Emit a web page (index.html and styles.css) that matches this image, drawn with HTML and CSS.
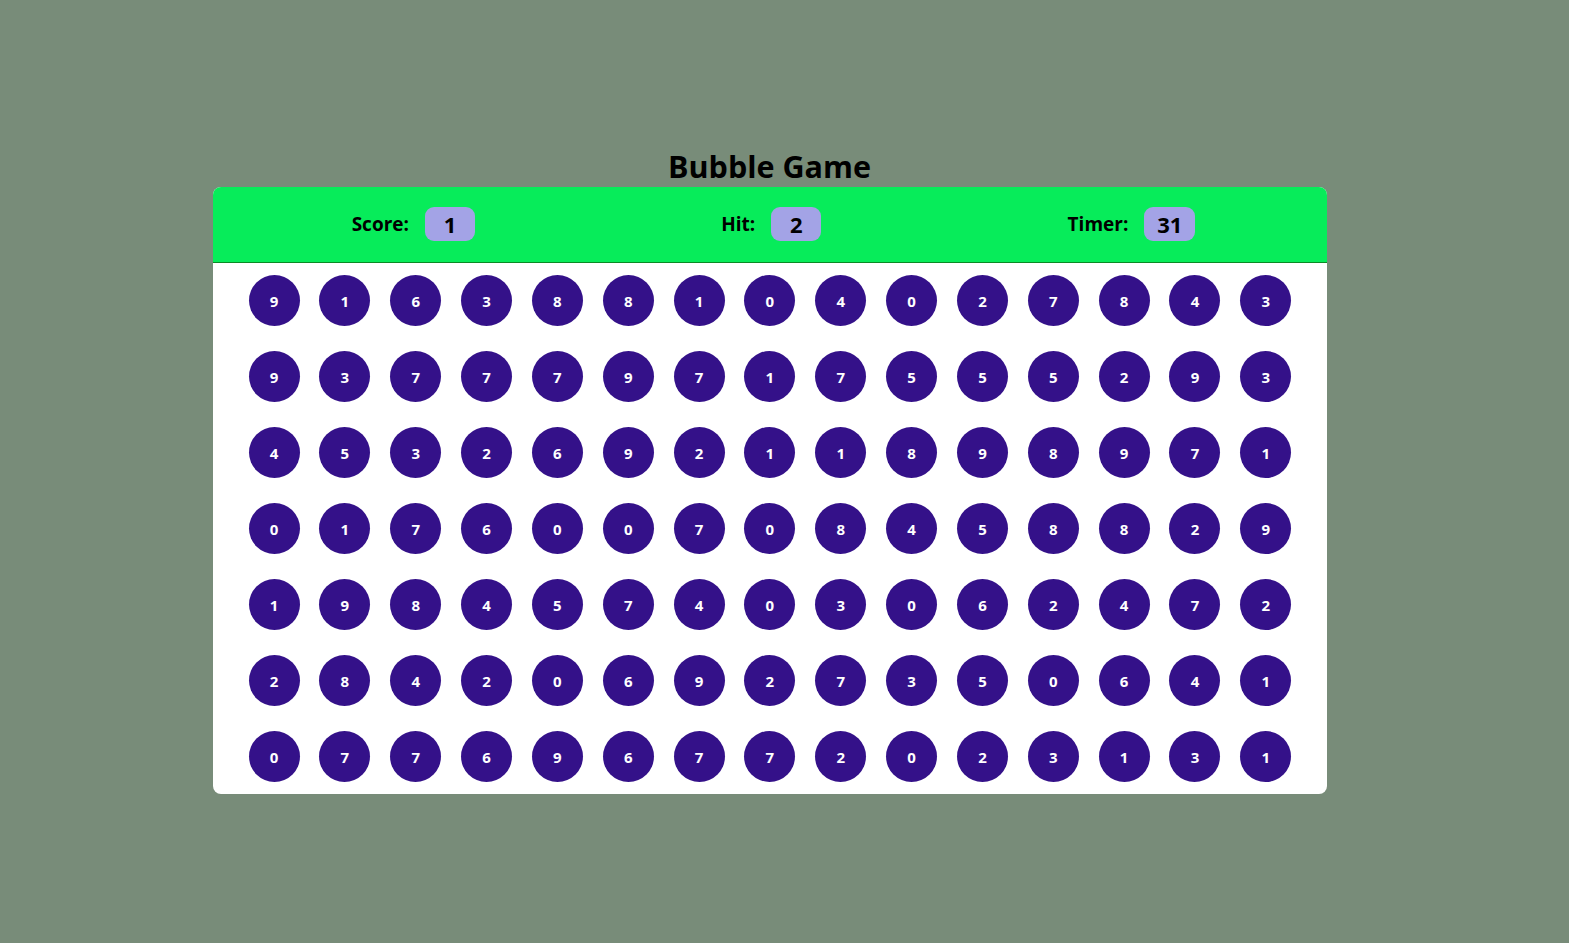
FILE: index.html
```html
<!DOCTYPE html>
<html>
<head>
<meta charset="utf-8">
<title>Bubble Game</title>
<link rel="stylesheet" href="styles.css">
</head>
<body>
<div class="page">
  <h1 class="title">Bubble Game</h1>
  <div class="panel">
    <div class="top">
      <div class="stat"><span class="label">Score:</span><span class="box">1</span></div>
      <div class="stat"><span class="label">Hit:</span><span class="box">2</span></div>
      <div class="stat"><span class="label">Timer:</span><span class="box wide">31</span></div>
    </div>
    <div class="grid" id="grid"></div>
  </div>
</div>
<script src="script.js"></script>
</body>
</html>
```
FILE: script.js
```js
const rows = [
"9 1 6 3 8 8 1 0 4 0 2 7 8 4 3",
"9 3 7 7 7 9 7 1 7 5 5 5 2 9 3",
"4 5 3 2 6 9 2 1 1 8 9 8 9 7 1",
"0 1 7 6 0 0 7 0 8 4 5 8 8 2 9",
"1 9 8 4 5 7 4 0 3 0 6 2 4 7 2",
"2 8 4 2 0 6 9 2 7 3 5 0 6 4 1",
"0 7 7 6 9 6 7 7 2 0 2 3 1 3 1"];
const g = document.getElementById('grid');
rows.forEach(r => r.split(' ').forEach(n => {
  const d = document.createElement('div');
  d.className = 'bubble';
  d.textContent = n;
  g.appendChild(d);
}));
```
FILE: styles.css
```css
html, body { margin: 0; padding: 0; }
body {
  background: #788c79;
  font-family: "Open Sans", "Noto Sans", sans-serif;
  width: 1569px;
  height: 943px;
  overflow: hidden;
}
.page {
  width: 1539px;
  display: flex;
  flex-direction: column;
  align-items: center;
  padding-top: 146px;
}
.title {
  margin: 0;
  font-size: 30.5px;
  font-weight: 700;
  line-height: 41px;
  color: #000;
}
.panel {
  width: 1114px;
  background: #fff;
  border-radius: 8px;
  overflow: hidden;
}
.top {
  height: 76px;
  box-sizing: border-box;
  background: #07ec5a;
  border-bottom: 1px solid #0b8a25;
  display: flex;
  justify-content: space-around;
  align-items: center;
  padding: 0 8px 1px 16px;
}
.stat { display: flex; align-items: center; gap: 16px; }
.label { font-size: 19px; font-weight: 700; color: #000; }
.box {
  background: #a3a3e6;
  border-radius: 9px;
  height: 34px;
  min-width: 50px;
  padding: 0 8px;
  box-sizing: border-box;
  display: flex;
  align-items: center;
  justify-content: center;
  font-size: 22px;
  font-weight: 700;
  color: #000;
}
.box.wide { min-width: 51px; }
.grid {
  display: grid;
  grid-template-columns: repeat(15, 51px);
  justify-content: space-between;
  row-gap: 25px;
  padding: 12px 35px 12px 36px;
}
.bubble {
  width: 51px;
  height: 51px;
  border-radius: 50%;
  background: #341189;
  color: #fff;
  display: flex;
  align-items: center;
  justify-content: center;
  font-size: 15px;
  font-weight: 700;
}
```
